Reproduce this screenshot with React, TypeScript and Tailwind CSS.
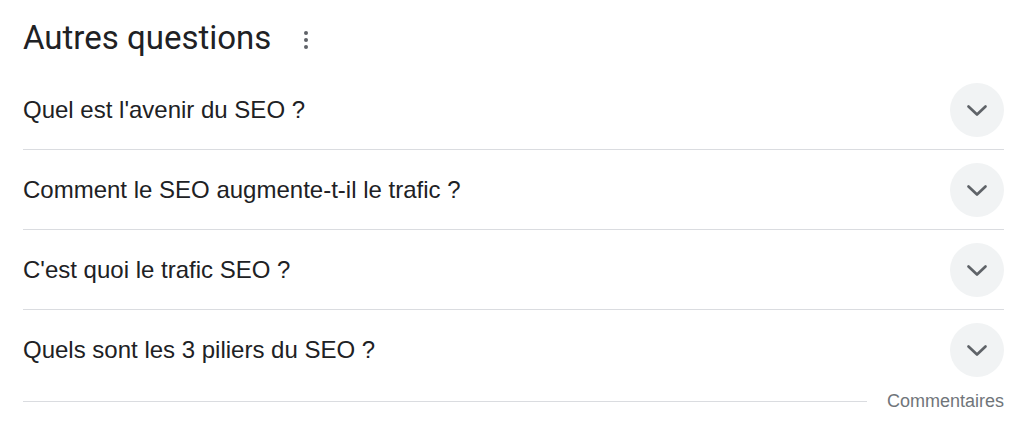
const questions = [
  "Quel est l'avenir du SEO ?",
  'Comment le SEO augmente-t-il le trafic ?',
  "C'est quoi le trafic SEO ?",
  'Quels sont les 3 piliers du SEO ?',
]

function Chevron() {
  return (
    <svg width="28" height="28" viewBox="0 0 28 28" className="text-[#5f6368]">
      <path d="M5.5 10.5 14 18.5l8.5-8" fill="none" stroke="currentColor" strokeWidth="2.7" strokeLinecap="round" strokeLinejoin="round" />
    </svg>
  )
}

export default function App() {
  return (
    <main className="w-[1024px] h-[437px] bg-white pl-[23px] pr-[20px] text-[#202124]">
      <header className="h-[70px] flex items-center gap-[33px] pt-[6px]">
        <h2 className="text-[33px] font-['Roboto',sans-serif]">Autres questions</h2>
        <div className="flex flex-col gap-[3px] pt-[4px]">
          <span className="w-[4px] h-[4px] rounded-full bg-[#5f6368]" />
          <span className="w-[4px] h-[4px] rounded-full bg-[#5f6368]" />
          <span className="w-[4px] h-[4px] rounded-full bg-[#5f6368]" />
        </div>
      </header>

      <div className="flex flex-col">
        {questions.map((q, i) => (
          <div
            key={q}
            className={
              'h-[80px] flex items-center justify-between ' +
              (i < questions.length - 1 ? 'border-b border-[#dadce0]' : '')
            }
          >
            <span className="text-[24px] font-['Liberation_Sans',Arial,sans-serif]">{q}</span>
            <button className="w-[54px] h-[54px] rounded-full bg-[#f1f3f4] flex items-center justify-center">
              <Chevron />
            </button>
          </div>
        ))}
      </div>

      <footer className="flex items-center gap-[20px] h-[22px]">
        <div className="flex-1 border-t border-[#dadce0]" />
        <span className="text-[18px] text-[#70757a] font-['Liberation_Sans',Arial,sans-serif]">Commentaires</span>
      </footer>
    </main>
  )
}
